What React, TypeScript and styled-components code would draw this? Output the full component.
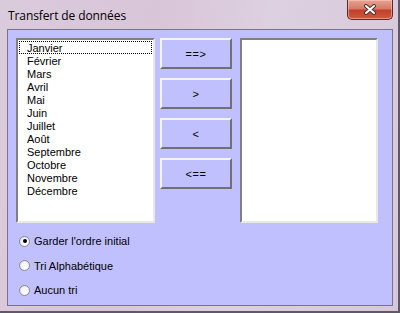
import React from 'react'
import styled, { createGlobalStyle } from 'styled-components'

const GlobalStyle = createGlobalStyle`
  html, body {
    margin: 0;
    padding: 0;
    background: #d9cadb;
  }
  * {
    box-sizing: border-box;
  }
`

const months = [
  'Janvier', 'Février', 'Mars', 'Avril', 'Mai', 'Juin',
  'Juillet', 'Août', 'Septembre', 'Octobre', 'Novembre', 'Décembre',
]

const moves = ['==>', '>', '<', '<==']

const sorts = ['Garder l\'ordre initial', 'Tri Alphabétique', 'Aucun tri']

const App: React.FC = () => {
  return (
    <>
      <GlobalStyle />
      <Window>
        <TitleBar>
          <Title>Transfert de données</Title>
          <CloseButton>
            <svg width="14" height="11" viewBox="0 0 14 11">
              <path d="M3 2 L11 9 M11 2 L3 9" stroke="#4a3436" strokeWidth="4" strokeLinecap="round" />
              <path d="M3 2 L11 9 M11 2 L3 9" stroke="#ffffff" strokeWidth="2" strokeLinecap="round" />
            </svg>
          </CloseButton>
        </TitleBar>
        <Client>
          <TopRow>
            <ListBox>
              {months.map((m, i) => (
                <Item key={m} focused={i === 0}>{m}</Item>
              ))}
            </ListBox>
            <ButtonColumn>
              {moves.map((label) => (
                <MoveButton key={label}>{label}</MoveButton>
              ))}
            </ButtonColumn>
            <ListBox />
          </TopRow>
          <RadioGroup>
            {sorts.map((s, i) => (
              <RadioRow key={s}>
                <RadioDot checked={i === 0} />
                <span>{s}</span>
              </RadioRow>
            ))}
          </RadioGroup>
        </Client>
      </Window>
    </>
  )
}

const Window = styled.div`
  width: 400px;
  height: 313px;
  background: linear-gradient(100deg, #dacbdc 0%, #d8c5d8 35%, #ddd0e0 60%, #d6c8da 100%);
  border-right: 2px solid #5e5868;
  border-bottom: 2px solid #5e5868;
  display: flex;
  flex-direction: column;
`

const TitleBar = styled.div`
  height: 29px;
  display: flex;
  align-items: flex-start;
  padding-left: 8px;
  padding-right: 5px;
`

const Title = styled.div`
  font-family: "Open Sans", "Liberation Sans", sans-serif;
  font-size: 12px;
  color: #000;
  margin-top: 7px;
  letter-spacing: -0.1px;
`

const CloseButton = styled.div`
  margin-left: auto;
  width: 46px;
  height: 20px;
  border: 1px solid #5a2a2a;
  border-top: none;
  border-radius: 0 0 5px 5px;
  background: linear-gradient(180deg, #e8a493 0%, #d77a68 45%, #c2402a 55%, #cf5a3e 100%);
  box-shadow: inset 0 0 0 1px rgba(255, 210, 200, 0.5);
  display: flex;
  align-items: center;
  justify-content: center;
`

const Client = styled.div`
  margin: 0 5px 0 7px;
  height: 277px;
  background: #c0c0ff;
  border: 1px solid #7a7488;
  padding: 8px 0 0 8px;
  display: flex;
  flex-direction: column;
`

const TopRow = styled.div`
  display: flex;
  align-items: flex-start;
`

const ListBox = styled.div`
  width: 139px;
  height: 185px;
  background: #fff;
  border-top: 2px solid #808080;
  border-left: 2px solid #808080;
  border-right: 2px solid #e8e8e8;
  border-bottom: 2px solid #e8e8e8;
  padding: 1px 0 0 0;
  display: flex;
  flex-direction: column;
  &:last-child {
    width: 138px;
    margin-left: 8px;
  }
`

const Item = styled.div<{ focused?: boolean }>`
  font-family: "Liberation Sans", Arial, sans-serif;
  font-size: 11px;
  line-height: 11px;
  height: 13px;
  padding-left: 7px;
  padding-top: 1px;
  margin: 0 1px;
  color: #000;
  border: 1px dotted ${(p) => (p.focused ? '#000' : 'transparent')};
`

const ButtonColumn = styled.div`
  display: flex;
  flex-direction: column;
  gap: 9px;
  margin-left: 5px;
`

const MoveButton = styled.div`
  width: 72px;
  height: 31px;
  background: #c0c0ff;
  border-top: 2px solid #f4f4ff;
  border-left: 2px solid #f4f4ff;
  border-right: 2px solid #707070;
  border-bottom: 2px solid #707070;
  display: flex;
  align-items: center;
  justify-content: center;
  font-family: "Liberation Sans", Arial, sans-serif;
  font-size: 11px;
  color: #000;
  letter-spacing: 0.5px;
`

const RadioGroup = styled.div`
  display: flex;
  flex-direction: column;
  gap: 12.5px;
  margin-top: 12px;
  padding-left: 3px;
`

const RadioRow = styled.div`
  display: flex;
  align-items: center;
  gap: 4px;
  height: 12px;
  font-family: "Liberation Sans", Arial, sans-serif;
  font-size: 11px;
  color: #000;
`

const RadioDot = styled.span<{ checked?: boolean }>`
  width: 11px;
  height: 11px;
  border-radius: 50%;
  border: 1px solid #8a8a9a;
  background: radial-gradient(circle at 60% 60%, #ffffff 0%, #f2f2f2 55%, #cfcfd6 100%);
  display: flex;
  align-items: center;
  justify-content: center;
  &::after {
    content: '';
    width: 4px;
    height: 4px;
    border-radius: 50%;
    background: ${(p) => (p.checked ? '#000' : 'transparent')};
  }
`

export default App
